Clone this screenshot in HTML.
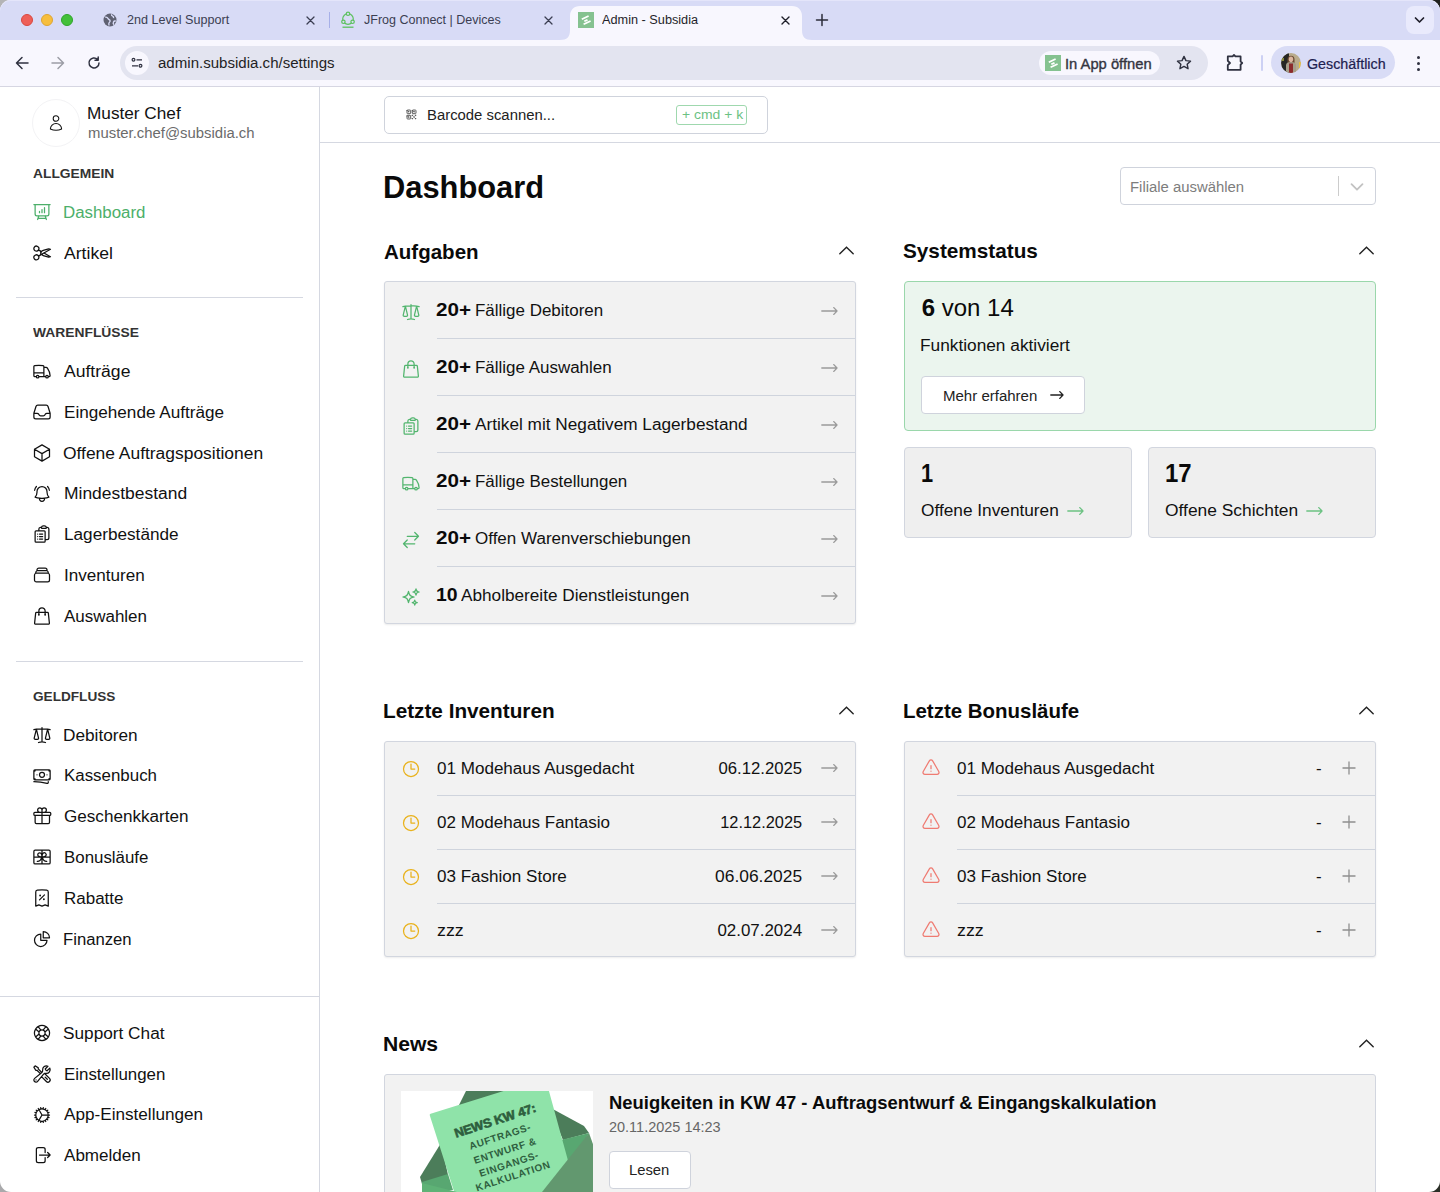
<!DOCTYPE html><html><head><meta charset="utf-8"><title>Admin - Subsidia</title>
<style>
html,body{margin:0;padding:0}
body{width:1440px;height:1192px;overflow:hidden;position:relative;background:#fff;font-family:"Liberation Sans", sans-serif;}
.t{position:absolute;white-space:pre;font-family:"Liberation Sans", sans-serif;}
svg{overflow:visible}
</style></head><body>
<div style="position:absolute;left:0px;top:0px;width:720px;height:596px;background:#b4b4b6"></div>
<div style="position:absolute;left:720px;top:0px;width:720px;height:596px;background:#1f211e"></div>
<div style="position:absolute;left:0px;top:596px;width:720px;height:596px;background:#a9a9ab"></div>
<div style="position:absolute;left:720px;top:596px;width:720px;height:596px;background:#2a2e26"></div>
<div style="position:absolute;left:0px;top:0px;width:1440px;height:1192px;background:#fff;border-radius:11px"></div>
<div style="position:absolute;left:0px;top:0px;width:1440px;height:40px;background:#d8dbf6;border-radius:11px 11px 0 0;box-shadow:inset 0 1px 0 #e4e5fa"></div>
<div style="position:absolute;left:21px;top:14px;width:12px;height:12px;background:#ee5f58;border-radius:50%;box-sizing:border-box;border:0.5px solid #d9473f"></div>
<div style="position:absolute;left:41px;top:14px;width:12px;height:12px;background:#f7be3d;border-radius:50%;box-sizing:border-box;border:0.5px solid #dea532"></div>
<div style="position:absolute;left:61px;top:14px;width:12px;height:12px;background:#43c03a;border-radius:50%;box-sizing:border-box;border:0.5px solid #2fa52a"></div>
<svg style="position:absolute;left:103px;top:13px" width="14" height="14" viewBox="0 0 14 14"><circle cx="7" cy="7" r="6.5" fill="#5f6172"/><path d="M2.2 4.2c1.4-.2 2.4.4 2.8 1.4.4 1 1.6 1 2 1.8.4.9-.3 1.8-.9 2.3-.5.4-.3 1.6-.1 2.8M8.6 1.2c-.3 1 .2 1.6 1.1 1.9.9.3 1 1.3.8 2M12.8 8.2c-.9-.3-1.9 0-2.3.8-.4.8-.3 2 .5 2.6" fill="none" stroke="#d8dbf6" stroke-width="1.4"/></svg>
<div class="t" id="t0" style="left:126.70px;top:14.24px;font-size:12px;line-height:12px;font-weight:400;color:#3b3e52;letter-spacing:0.0px;transform-origin:left center;transform:scaleX(1.0492);">2nd Level Support</div>
<svg style="position:absolute;left:305.5px;top:15.5px" width="9" height="9" viewBox="0 0 9 9"><path d="M1 1l7 7M8 1L1 8" stroke="#3b3e52" stroke-width="1.3" stroke-linecap="round"/></svg>
<div style="position:absolute;left:329px;top:12px;width:1px;height:16px;background:#a7b0e8"></div>
<svg style="position:absolute;left:340px;top:11px" width="16" height="18" viewBox="0 0 16 18"><circle cx="8" cy="8" r="5.3" fill="none" stroke="#5cc15e" stroke-width="1.2"/><circle cx="8" cy="2.8" r="1.7" fill="#d8dbf6" stroke="#5cc15e" stroke-width="1.2"/><circle cx="3.4" cy="10.8" r="1.7" fill="#d8dbf6" stroke="#5cc15e" stroke-width="1.2"/><circle cx="12.6" cy="10.8" r="1.7" fill="#d8dbf6" stroke="#5cc15e" stroke-width="1.2"/><path d="M2.5 16.2h11" stroke="#5cc15e" stroke-width="1.3"/></svg>
<div class="t" id="t1" style="left:364.40px;top:14.24px;font-size:12px;line-height:12px;font-weight:400;color:#3b3e52;letter-spacing:0.0px;transform-origin:left center;transform:scaleX(1.0429);">JFrog Connect | Devices</div>
<svg style="position:absolute;left:543.5px;top:15.5px" width="9" height="9" viewBox="0 0 9 9"><path d="M1 1l7 7M8 1L1 8" stroke="#3b3e52" stroke-width="1.3" stroke-linecap="round"/></svg>
<svg style="position:absolute;left:560px;top:6px" width="252" height="34" viewBox="0 0 252 34"><path d="M0 34 C7 34 10 31 10 24 V10 C10 4 14 0 20 0 H232 C238 0 242 4 242 10 V24 C242 31 245 34 252 34 Z" fill="#f8f7fe"/></svg>
<svg style="position:absolute;left:578px;top:12px" width="16" height="16" viewBox="0 0 16 16"><rect width="16" height="16" fill="#85c290"/><path d="M3.8 7.2 L10.6 4.0 M6.3 9.3 L9.5 7.9 M5.6 12.3 L12.6 9.0" fill="none" stroke="#fff" stroke-width="1.8" stroke-linecap="butt"/></svg>
<div class="t" id="t2" style="left:602.30px;top:14.24px;font-size:12px;line-height:12px;font-weight:400;color:#1f1f2a;letter-spacing:0.0px;transform-origin:left center;transform:scaleX(1.0593);">Admin - Subsidia</div>
<svg style="position:absolute;left:781px;top:15.5px" width="9" height="9" viewBox="0 0 9 9"><path d="M1 1l7 7M8 1L1 8" stroke="#1f1f2a" stroke-width="1.4" stroke-linecap="round"/></svg>
<svg style="position:absolute;left:816px;top:14px" width="12" height="12" viewBox="0 0 12 12"><path d="M6 0.5v11M0.5 6h11" stroke="#2b2d3a" stroke-width="1.5" stroke-linecap="round"/></svg>
<div style="position:absolute;left:1406px;top:6px;width:28px;height:28px;background:#e9eafc;border-radius:8px"></div>
<svg style="position:absolute;left:1414px;top:16px" width="11" height="8" viewBox="0 0 11 8"><path d="M1.5 2l4 4 4-4" fill="none" stroke="#1f1f2a" stroke-width="1.7" stroke-linecap="round" stroke-linejoin="round"/></svg>
<div style="position:absolute;left:0px;top:40px;width:1440px;height:46px;background:#f8f7fe"></div>
<div style="position:absolute;left:0px;top:86px;width:1440px;height:1px;background:#d6d6e2"></div>
<svg style="position:absolute;left:15px;top:56px" width="14" height="14" viewBox="0 0 14 14"><path d="M13 7H1.5M7 1.5 1.5 7 7 12.5" fill="none" stroke="#2f3140" stroke-width="1.5" stroke-linecap="round" stroke-linejoin="round"/></svg>
<svg style="position:absolute;left:51px;top:56px" width="14" height="14" viewBox="0 0 14 14"><path d="M1 7h11.5M7 1.5 12.5 7 7 12.5" fill="none" stroke="#9c9da6" stroke-width="1.5" stroke-linecap="round" stroke-linejoin="round"/></svg>
<svg style="position:absolute;left:87px;top:56px" width="14" height="14" viewBox="0 0 14 14"><path d="M12 7a5 5 0 1 1-1.5-3.6M11.2 1v3.2H8" fill="none" stroke="#2f3140" stroke-width="1.5" stroke-linecap="round" stroke-linejoin="round"/></svg>
<div style="position:absolute;left:120px;top:46px;width:1088px;height:34px;background:#e3e4f0;border-radius:17px"></div>
<div style="position:absolute;left:125px;top:51px;width:24px;height:24px;background:#f8f7fe;border-radius:50%"></div>
<svg style="position:absolute;left:131px;top:57px" width="12" height="12" viewBox="0 0 12 12"><circle cx="2.5" cy="2.8" r="1.4" fill="none" stroke="#2f3140" stroke-width="1.2"/><path d="M5.5 2.8h5.5M1 8.8h6" stroke="#2f3140" stroke-width="1.3"/><circle cx="9.5" cy="8.8" r="1.4" fill="none" stroke="#2f3140" stroke-width="1.2"/></svg>
<div class="t" id="t3" style="left:157.50px;top:56.45px;font-size:14px;line-height:14px;font-weight:400;color:#1f1f24;letter-spacing:0.0px;transform-origin:left center;transform:scaleX(1.0755);">admin.subsidia.ch/settings</div>
<div style="position:absolute;left:1039px;top:51px;width:121px;height:24px;background:#f8f7fe;border-radius:12px"></div>
<svg style="position:absolute;left:1045px;top:55px" width="16" height="16" viewBox="0 0 16 16"><rect width="16" height="16" fill="#85c290"/><path d="M3.8 7.2 L10.6 4.0 M6.3 9.3 L9.5 7.9 M5.6 12.3 L12.6 9.0" fill="none" stroke="#fff" stroke-width="1.8" stroke-linecap="butt"/></svg>
<div class="t" id="t4" style="left:1065.00px;top:56.65px;font-size:14px;line-height:14px;font-weight:400;color:#34353f;letter-spacing:0.0px;transform-origin:left center;transform:scaleX(1.0527);-webkit-text-stroke:0.35px #34353f;">In App öffnen</div>
<svg style="position:absolute;left:1175px;top:54px" width="18" height="18" viewBox="0 0 24 24"><path d="M12 3.2l2.6 5.6 6.1.7-4.5 4.1 1.2 6-5.4-3-5.4 3 1.2-6-4.5-4.1 6.1-.7z" fill="none" stroke="#2f3140" stroke-width="1.9" stroke-linejoin="round"/></svg>
<svg style="position:absolute;left:1226px;top:54px" width="18" height="18" viewBox="0 0 18 18"><path d="M1.8 2.4h4.8l1.4-1.5 1.4 1.5h5.2v5l1.6 1.6-1.6 1.6v5.2H1.8v-4.6l2.2-2.2-2.2-2.2z" fill="none" stroke="#2f3140" stroke-width="1.8" stroke-linejoin="round"/></svg>
<div style="position:absolute;left:1260.5px;top:55px;width:2px;height:16px;background:#cdd1f4;border-radius:1px"></div>
<div style="position:absolute;left:1271px;top:46px;width:124px;height:33px;background:#d9dcf6;border-radius:17px"></div>
<svg style="position:absolute;left:1280.5px;top:52.7px" width="20" height="20" viewBox="0 0 20 20"><defs><clipPath id="cav"><circle cx="10" cy="10" r="9.9"/></clipPath></defs><g clip-path="url(#cav)"><rect width="20" height="20" fill="#b9ab8c"/><rect x="0" y="0" width="8" height="20" fill="#262624"/><rect x="0" y="5" width="3" height="3" fill="#8a8a3a"/><path d="M6.5 6c0-4.5 7-4.5 7 0v9h-7z" fill="#6b4a32"/><ellipse cx="10" cy="6.2" rx="2.2" ry="2.8" fill="#dcb6a0"/><path d="M5 20v-8c0-2 2-3 5-3s5 1 5 3v8z" fill="#a69e8a"/><rect x="8" y="10.5" width="4" height="9.5" fill="#8c2a2c"/><rect x="18" y="9" width="2" height="8" fill="#e7c040"/></g></svg>
<div class="t" id="t5" style="left:1307.00px;top:56.65px;font-size:14px;line-height:14px;font-weight:400;color:#1e2150;letter-spacing:0.0px;transform-origin:left center;transform:scaleX(1.0202);-webkit-text-stroke:0.2px #1e2150;">Geschäftlich</div>
<div style="position:absolute;left:1416.5px;top:55.5px;width:3px;height:3px;background:#2f3140;border-radius:50%"></div>
<div style="position:absolute;left:1416.5px;top:61.5px;width:3px;height:3px;background:#2f3140;border-radius:50%"></div>
<div style="position:absolute;left:1416.5px;top:67.5px;width:3px;height:3px;background:#2f3140;border-radius:50%"></div>
<div style="position:absolute;left:319px;top:87px;width:1px;height:1105px;background:#d5d8e1"></div>
<div style="position:absolute;left:32px;top:99px;width:48px;height:48px;border-radius:50%;box-sizing:border-box;border:1px solid #f3f3f5;background:#fff"></div>
<svg style="position:absolute;left:47px;top:114px" width="18" height="18" viewBox="0 0 24 24" fill="none" stroke="#111" stroke-width="1.4" stroke-linecap="round" stroke-linejoin="round"><path d="M15.75 6a3.75 3.75 0 1 1-7.5 0 3.75 3.75 0 0 1 7.5 0ZM4.501 20.118a7.5 7.5 0 0 1 14.998 0A17.933 17.933 0 0 1 12 21.75c-2.676 0-5.216-.584-7.499-1.632Z"/></svg>
<div class="t" id="t6" style="left:87.40px;top:105.66px;font-size:16px;line-height:16px;font-weight:400;color:#111;letter-spacing:0.0px;transform-origin:left center;transform:scaleX(1.0753);">Muster Chef</div>
<div class="t" id="t7" style="left:87.50px;top:126.45px;font-size:14px;line-height:14px;font-weight:400;color:#6b6b6b;letter-spacing:0.0px;transform-origin:left center;transform:scaleX(1.0637);">muster.chef@subsidia.ch</div>
<div class="t" id="t8" style="left:32.50px;top:167.30px;font-size:13px;line-height:13px;font-weight:700;color:#333;letter-spacing:0.0px;transform-origin:left center;transform:scaleX(1.0619);">ALLGEMEIN</div>
<svg style="position:absolute;left:32px;top:202.2px" width="20" height="20" viewBox="0 0 24 24" fill="none" stroke="#4caf6a" stroke-width="1.5" stroke-linecap="round" stroke-linejoin="round"><path d="M3.75 3v11.25A2.25 2.25 0 0 0 6 16.5h2.25M3.75 3h-1.5m1.5 0h16.5m0 0h1.5m-1.5 0v11.25A2.25 2.25 0 0 1 18 16.5h-2.25m-7.5 0h7.5m-7.5 0-1 3m8.5-3 1 3m0 0 .5 1.5m-.5-1.5h-9.5m0 0-.5 1.5M9 11.25v1.5M12 9v3.75m3-6v6"/></svg>
<div class="t" id="t9" style="left:62.80px;top:204.96px;font-size:16px;line-height:16px;font-weight:400;color:#4caf6a;letter-spacing:0.0px;transform-origin:left center;transform:scaleX(1.0539);">Dashboard</div>
<svg style="position:absolute;left:32px;top:243.39999999999998px" width="20" height="20" viewBox="0 0 24 24" fill="none" stroke="#111" stroke-width="1.5" stroke-linecap="round" stroke-linejoin="round"><path d="m7.848 8.25 1.536.887M7.848 8.25a3 3 0 1 1-5.196-3 3 3 0 0 1 5.196 3Zm1.536.887a2.165 2.165 0 0 1 1.083 1.839c.005.351.054.695.14 1.024M9.384 9.137l2.077 1.199M7.848 15.75l1.536-.887m-1.536.887a3 3 0 1 1-5.196 3 3 3 0 0 1 5.196-3Zm1.536-.887a2.165 2.165 0 0 0 1.083-1.838c.005-.352.054-.695.14-1.025m-1.223 2.863 2.077-1.199m0-3.328a4.323 4.323 0 0 1 2.068-1.379l5.325-1.628a4.5 4.5 0 0 1 2.48-.044l.803.215-7.794 4.5m-2.882-1.664A4.33 4.33 0 0 0 10.607 12m3.736 0 7.794 4.5-.802.215a4.5 4.5 0 0 1-2.48-.043l-5.326-1.629a4.324 4.324 0 0 1-2.068-1.379M14.343 12l-2.882 1.664"/></svg>
<div class="t" id="t10" style="left:63.50px;top:246.16px;font-size:16px;line-height:16px;font-weight:400;color:#111;letter-spacing:0.0px;transform-origin:left center;transform:scaleX(1.1000);">Artikel</div>
<div style="position:absolute;left:16px;top:297px;width:287px;height:1px;background:#d5d8e1"></div>
<div class="t" id="t11" style="left:32.50px;top:326.10px;font-size:13px;line-height:13px;font-weight:700;color:#333;letter-spacing:0.0px;transform-origin:left center;transform:scaleX(1.0635);">WARENFLÜSSE</div>
<svg style="position:absolute;left:32px;top:361.09999999999997px" width="20" height="20" viewBox="0 0 24 24" fill="none" stroke="#111" stroke-width="1.5" stroke-linecap="round" stroke-linejoin="round"><path d="M8.25 18.75a1.5 1.5 0 0 1-3 0m3 0a1.5 1.5 0 0 0-3 0m3 0h6m-9 0H3.375a1.125 1.125 0 0 1-1.125-1.125V14.25m17.25 4.5a1.5 1.5 0 0 1-3 0m3 0a1.5 1.5 0 0 0-3 0m3 0h1.125c.621 0 1.129-.504 1.09-1.124a17.902 17.902 0 0 0-3.213-9.193 2.056 2.056 0 0 0-1.58-.86H14.25M16.5 18.75h-2.25m0-11.177v-.958c0-.568-.422-1.048-.987-1.106a48.554 48.554 0 0 0-10.026 0 1.106 1.106 0 0 0-.987 1.106v7.635m12-6.677v6.677m0 4.5v-4.5m0 0h-12"/></svg>
<div class="t" id="t12" style="left:63.50px;top:363.86px;font-size:16px;line-height:16px;font-weight:400;color:#111;letter-spacing:0.0px;transform-origin:left center;transform:scaleX(1.0978);">Aufträge</div>
<svg style="position:absolute;left:32px;top:401.91999999999996px" width="20" height="20" viewBox="0 0 24 24" fill="none" stroke="#111" stroke-width="1.5" stroke-linecap="round" stroke-linejoin="round"><path d="M2.25 13.5h3.86a2.25 2.25 0 0 1 2.012 1.244l.256.512a2.25 2.25 0 0 0 2.013 1.244h3.218a2.25 2.25 0 0 0 2.013-1.244l.256-.512a2.25 2.25 0 0 1 2.013-1.244h3.859m-19.5.338V18a2.25 2.25 0 0 0 2.25 2.25h15A2.25 2.25 0 0 0 21.75 18v-4.162c0-.224-.034-.447-.1-.661L19.24 5.338a2.25 2.25 0 0 0-2.15-1.588H6.911a2.25 2.25 0 0 0-2.15 1.588L2.35 13.177a2.25 2.25 0 0 0-.1.661Z"/></svg>
<div class="t" id="t13" style="left:63.50px;top:404.68px;font-size:16px;line-height:16px;font-weight:400;color:#111;letter-spacing:0.0px;transform-origin:left center;transform:scaleX(1.0705);">Eingehende Aufträge</div>
<svg style="position:absolute;left:32px;top:442.73999999999995px" width="20" height="20" viewBox="0 0 24 24" fill="none" stroke="#111" stroke-width="1.5" stroke-linecap="round" stroke-linejoin="round"><path d="m21 7.5-9-5.25L3 7.5m18 0-9 5.25m9-5.25v9l-9 5.25M3 7.5l9 5.25M3 7.5v9l9 5.25m0-9v9"/></svg>
<div class="t" id="t14" style="left:62.80px;top:445.50px;font-size:16px;line-height:16px;font-weight:400;color:#111;letter-spacing:0.0px;transform-origin:left center;transform:scaleX(1.0884);">Offene Auftragspositionen</div>
<svg style="position:absolute;left:32px;top:483.56px" width="20" height="20" viewBox="0 0 24 24" fill="none" stroke="#111" stroke-width="1.5" stroke-linecap="round" stroke-linejoin="round"><path d="M14.857 17.082a23.848 23.848 0 0 0 5.454-1.31A8.967 8.967 0 0 1 18 9.75V9A6 6 0 0 0 6 9v.75a8.967 8.967 0 0 1-2.312 6.022c1.733.64 3.56 1.085 5.455 1.31m5.714 0a24.255 24.255 0 0 1-5.714 0m5.714 0a3 3 0 1 1-5.714 0M3.124 7.5A8.969 8.969 0 0 1 5.292 3m13.416 0a8.969 8.969 0 0 1 2.168 4.5"/></svg>
<div class="t" id="t15" style="left:63.50px;top:486.32px;font-size:16px;line-height:16px;font-weight:400;color:#111;letter-spacing:0.0px;transform-origin:left center;transform:scaleX(1.0897);">Mindestbestand</div>
<svg style="position:absolute;left:32px;top:524.38px" width="20" height="20" viewBox="0 0 24 24" fill="none" stroke="#111" stroke-width="1.5" stroke-linecap="round" stroke-linejoin="round"><path d="M9 12h3.75M9 15h3.75M9 18h3.75m3 .75H18a2.25 2.25 0 0 0 2.25-2.25V6.108c0-1.135-.845-2.098-1.976-2.192a48.424 48.424 0 0 0-1.123-.08m-5.801 0c-.065.21-.1.433-.1.664 0 .414.336.75.75.75h4.5a.75.75 0 0 0 .75-.75 2.25 2.25 0 0 0-.1-.664m-5.8 0A2.251 2.251 0 0 1 13.5 2.25H15c1.012 0 1.867.668 2.15 1.586m-5.8 0c-.376.023-.75.05-1.124.08C9.095 4.01 8.25 4.973 8.25 6.108V8.25m0 0H4.875c-.621 0-1.125.504-1.125 1.125v11.25c0 .621.504 1.125 1.125 1.125h9.75c.621 0 1.125-.504 1.125-1.125V9.375c0-.621-.504-1.125-1.125-1.125H8.25ZM6.75 12h.008v.008H6.75V12Zm0 3h.008v.008H6.75V15Zm0 3h.008v.008H6.75V18Z"/></svg>
<div class="t" id="t16" style="left:63.50px;top:527.14px;font-size:16px;line-height:16px;font-weight:400;color:#111;letter-spacing:0.0px;transform-origin:left center;transform:scaleX(1.0734);">Lagerbestände</div>
<svg style="position:absolute;left:32px;top:565.2px" width="20" height="20" viewBox="0 0 24 24" fill="none" stroke="#111" stroke-width="1.5" stroke-linecap="round" stroke-linejoin="round"><path d="M6 6.878V6a2.25 2.25 0 0 1 2.25-2.25h7.5A2.25 2.25 0 0 1 18 6v.878m-12 0c.235-.083.487-.128.75-.128h10.5c.263 0 .515.045.75.128m-12 0A2.25 2.25 0 0 0 4.5 9v.878m13.5-3A2.25 2.25 0 0 1 19.5 9v.878m0 0a2.246 2.246 0 0 0-.75-.128H5.25c-.263 0-.515.045-.75.128m15 0A2.25 2.25 0 0 1 21 12v6a2.25 2.25 0 0 1-2.25 2.25H5.25A2.25 2.25 0 0 1 3 18v-6c0-.98.626-1.813 1.5-2.122"/></svg>
<div class="t" id="t17" style="left:63.50px;top:567.96px;font-size:16px;line-height:16px;font-weight:400;color:#111;letter-spacing:0.0px;transform-origin:left center;transform:scaleX(1.0687);">Inventuren</div>
<svg style="position:absolute;left:32px;top:606.02px" width="20" height="20" viewBox="0 0 24 24" fill="none" stroke="#111" stroke-width="1.5" stroke-linecap="round" stroke-linejoin="round"><path d="M15.75 10.5V6a3.75 3.75 0 1 0-7.5 0v4.5m11.356-1.993 1.263 12c.07.665-.45 1.243-1.119 1.243H4.25a1.125 1.125 0 0 1-1.12-1.243l1.264-12A1.125 1.125 0 0 1 5.513 7.5h12.974c.576 0 1.059.435 1.119 1.007ZM8.625 10.5a.375.375 0 1 1-.75 0 .375.375 0 0 1 .75 0Zm7.5 0a.375.375 0 1 1-.75 0 .375.375 0 0 1 .75 0Z"/></svg>
<div class="t" id="t18" style="left:63.50px;top:608.78px;font-size:16px;line-height:16px;font-weight:400;color:#111;letter-spacing:0.0px;transform-origin:left center;transform:scaleX(1.0603);">Auswahlen</div>
<div style="position:absolute;left:16px;top:661px;width:287px;height:1px;background:#d5d8e1"></div>
<div class="t" id="t19" style="left:32.50px;top:690.20px;font-size:13px;line-height:13px;font-weight:700;color:#333;letter-spacing:0.0px;transform-origin:left center;transform:scaleX(1.0466);">GELDFLUSS</div>
<svg style="position:absolute;left:32px;top:724.8000000000001px" width="20" height="20" viewBox="0 0 24 24" fill="none" stroke="#111" stroke-width="1.5" stroke-linecap="round" stroke-linejoin="round"><path d="M12 3v17.25m0 0c-1.472 0-2.882.265-4.185.75M12 20.25c1.472 0 2.882.265 4.185.75M18.75 4.97A48.416 48.416 0 0 0 12 4.5c-2.291 0-4.545.16-6.75.47m13.5 0c1.01.143 2.01.317 3 .52m-3-.52 2.62 10.726c.122.499-.106 1.028-.589 1.202a5.988 5.988 0 0 1-2.031.352 5.988 5.988 0 0 1-2.031-.352c-.483-.174-.711-.703-.59-1.202L18.75 4.971Zm-16.5.52c.99-.203 1.99-.377 3-.52m0 0 2.62 10.726c.122.499-.106 1.028-.589 1.202a5.989 5.989 0 0 1-2.031.352 5.989 5.989 0 0 1-2.031-.352c-.483-.174-.711-.703-.59-1.202L5.25 4.971Z"/></svg>
<div class="t" id="t20" style="left:62.80px;top:727.56px;font-size:16px;line-height:16px;font-weight:400;color:#111;letter-spacing:0.0px;transform-origin:left center;transform:scaleX(1.0768);">Debitoren</div>
<svg style="position:absolute;left:32px;top:765.6200000000001px" width="20" height="20" viewBox="0 0 24 24" fill="none" stroke="#111" stroke-width="1.5" stroke-linecap="round" stroke-linejoin="round"><path d="M2.25 18.75a60.07 60.07 0 0 1 15.797 2.101c.727.198 1.453-.342 1.453-1.096V18.75M3.75 4.5v.75A.75.75 0 0 1 3 6h-.75m0 0v-.375c0-.621.504-1.125 1.125-1.125H20.25M2.25 6v9m18-10.5v.75c0 .414.336.75.75.75h.75m-1.5-1.5h.375c.621 0 1.125.504 1.125 1.125v9.75c0 .621-.504 1.125-1.125 1.125h-.375m1.5-1.5H21a.75.75 0 0 0-.75.75v.75m0 0H3.75m0 0h-.375a1.125 1.125 0 0 1-1.125-1.125V15m1.5 1.5v-.75A.75.75 0 0 0 3 15h-.75M15 10.5a3 3 0 1 1-6 0 3 3 0 0 1 6 0Zm3 0h.008v.008H18V10.5Zm-12 0h.008v.008H6V10.5Z"/></svg>
<div class="t" id="t21" style="left:63.50px;top:768.38px;font-size:16px;line-height:16px;font-weight:400;color:#111;letter-spacing:0.0px;transform-origin:left center;transform:scaleX(1.0561);">Kassenbuch</div>
<svg style="position:absolute;left:32px;top:806.44px" width="20" height="20" viewBox="0 0 24 24" fill="none" stroke="#111" stroke-width="1.5" stroke-linecap="round" stroke-linejoin="round"><path d="M21 11.25v8.25a1.5 1.5 0 0 1-1.5 1.5H5.25a1.5 1.5 0 0 1-1.5-1.5v-8.25M12 4.875A2.625 2.625 0 1 0 9.375 7.5H12m0-2.625V7.5m0-2.625A2.625 2.625 0 1 1 14.625 7.5H12m0 0V21m-8.625-9.75h18c.621 0 1.125-.504 1.125-1.125v-1.5c0-.621-.504-1.125-1.125-1.125h-18c-.621 0-1.125.504-1.125 1.125v1.5c0 .621.504 1.125 1.125 1.125Z"/></svg>
<div class="t" id="t22" style="left:63.50px;top:809.20px;font-size:16px;line-height:16px;font-weight:400;color:#111;letter-spacing:0.0px;transform-origin:left center;transform:scaleX(1.0685);">Geschenkkarten</div>
<svg style="position:absolute;left:32px;top:847.2600000000001px" width="20" height="20" viewBox="0 0 24 24" fill="none" stroke="#111" stroke-width="1.5" stroke-linecap="round" stroke-linejoin="round"><path d="M12 3.75v16.5M2.25 12h19.5M6.375 17.25a4.875 4.875 0 0 0 4.875-4.875V12m6.375 5.25a4.875 4.875 0 0 1-4.875-4.875V12m-9 8.25h16.5a1.5 1.5 0 0 0 1.5-1.5V5.25a1.5 1.5 0 0 0-1.5-1.5H3.75a1.5 1.5 0 0 0-1.5 1.5v13.5a1.5 1.5 0 0 0 1.5 1.5Zm12.621-9.44c-1.409 1.41-4.242 1.061-4.242 1.061s-.349-2.833 1.06-4.242a2.25 2.25 0 0 1 3.182 3.182ZM10.773 7.63c1.409 1.409 1.06 4.242 1.06 4.242S9 12.22 7.592 10.811a2.25 2.25 0 1 1 3.182-3.182Z"/></svg>
<div class="t" id="t23" style="left:63.50px;top:850.02px;font-size:16px;line-height:16px;font-weight:400;color:#111;letter-spacing:0.0px;transform-origin:left center;transform:scaleX(1.0542);">Bonusläufe</div>
<svg style="position:absolute;left:32px;top:888.08px" width="20" height="20" viewBox="0 0 24 24" fill="none" stroke="#111" stroke-width="1.5" stroke-linecap="round" stroke-linejoin="round"><path d="m9 14.25 6-6m4.5-3.493V21.75l-3.75-1.5-3.75 1.5-3.75-1.5-3.75 1.5V4.757c0-1.108.806-2.057 1.907-2.185a48.507 48.507 0 0 1 11.186 0c1.1.128 1.907 1.077 1.907 2.185ZM9.75 9h.008v.008H9.75V9Zm.375 0a.375.375 0 1 1-.75 0 .375.375 0 0 1 .75 0Zm4.125 4.5h.008v.008h-.008V13.5Zm.375 0a.375.375 0 1 1-.75 0 .375.375 0 0 1 .75 0Z"/></svg>
<div class="t" id="t24" style="left:63.50px;top:890.84px;font-size:16px;line-height:16px;font-weight:400;color:#111;letter-spacing:0.0px;transform-origin:left center;transform:scaleX(1.0616);">Rabatte</div>
<svg style="position:absolute;left:32px;top:928.9000000000001px" width="20" height="20" viewBox="0 0 24 24" fill="none" stroke="#111" stroke-width="1.5" stroke-linecap="round" stroke-linejoin="round"><path d="M10.5 6a7.5 7.5 0 1 0 7.5 7.5h-7.5V6Z M13.5 10.5H21A7.5 7.5 0 0 0 13.5 3v7.5Z"/></svg>
<div class="t" id="t25" style="left:62.80px;top:931.66px;font-size:16px;line-height:16px;font-weight:400;color:#111;letter-spacing:0.0px;transform-origin:left center;transform:scaleX(1.0421);">Finanzen</div>
<div style="position:absolute;left:0px;top:996px;width:319px;height:1px;background:#d5d8e1"></div>
<svg style="position:absolute;left:32px;top:1023.0px" width="20" height="20" viewBox="0 0 24 24" fill="none" stroke="#111" stroke-width="1.5" stroke-linecap="round" stroke-linejoin="round"><path d="M16.712 4.33a9.027 9.027 0 0 1 1.652 1.306c.51.51.944 1.064 1.306 1.652M16.712 4.33l-3.448 4.138m3.448-4.138a9.014 9.014 0 0 0-9.424 0M19.67 7.288l-4.138 3.448m4.138-3.448a9.014 9.014 0 0 1 0 9.424m-4.138-5.976a3.736 3.736 0 0 0-.88-1.388 3.737 3.737 0 0 0-1.388-.88m2.268 2.268a3.765 3.765 0 0 1 0 2.528m-2.268-4.796a3.765 3.765 0 0 0-2.528 0m4.796 4.796c-.181.506-.475.982-.88 1.388a3.736 3.736 0 0 1-1.388.88m2.268-2.268 4.138 3.448m0 0a9.027 9.027 0 0 1-1.306 1.652c-.51.51-1.064.944-1.652 1.306m0 0-3.448-4.138m3.448 4.138a9.014 9.014 0 0 1-9.424 0m5.976-4.138a3.765 3.765 0 0 1-2.528 0m0 0a3.736 3.736 0 0 1-1.388-.88 3.737 3.737 0 0 1-.88-1.388m2.268 2.268L7.288 19.67m0 0a9.024 9.024 0 0 1-1.652-1.306 9.027 9.027 0 0 1-1.306-1.652m0 0 4.138-3.448M4.33 16.712a9.014 9.014 0 0 1 0-9.424m4.138 5.976a3.765 3.765 0 0 1 0-2.528m0 0c.181-.506.475-.982.88-1.388a3.736 3.736 0 0 1 1.388-.88m-2.268 2.268L4.33 7.288m6.406 1.18L7.288 4.33m0 0a9.024 9.024 0 0 0-1.652 1.306A9.025 9.025 0 0 0 4.33 7.288"/></svg>
<div class="t" id="t26" style="left:62.80px;top:1025.76px;font-size:16px;line-height:16px;font-weight:400;color:#111;letter-spacing:0.0px;transform-origin:left center;transform:scaleX(1.0766);">Support Chat</div>
<svg style="position:absolute;left:32px;top:1063.82px" width="20" height="20" viewBox="0 0 24 24" fill="none" stroke="#111" stroke-width="1.5" stroke-linecap="round" stroke-linejoin="round"><path d="M11.42 15.17 17.25 21A2.652 2.652 0 0 0 21 17.25l-5.877-5.877M11.42 15.17l2.496-3.03c.317-.384.74-.626 1.208-.766M11.42 15.17l-4.655 5.653a2.548 2.548 0 1 1-3.586-3.586l6.837-5.63m5.108-.233c.55-.164 1.163-.188 1.743-.14a4.5 4.5 0 0 0 4.486-6.336l-3.276 3.277a3.004 3.004 0 0 1-2.25-2.25l3.276-3.276a4.5 4.5 0 0 0-6.336 4.486c.091 1.076-.071 2.264-.904 2.95l-.102.085m-1.745 1.437L5.909 7.5H4.5L2.25 3.75l1.5-1.5L7.5 4.5v1.409l4.26 4.26m-1.745 1.437 1.745-1.437m6.615 8.206L15.75 15.75M4.867 19.125h.008v.008h-.008v-.008Z"/></svg>
<div class="t" id="t27" style="left:63.50px;top:1066.58px;font-size:16px;line-height:16px;font-weight:400;color:#111;letter-spacing:0.0px;transform-origin:left center;transform:scaleX(1.0544);">Einstellungen</div>
<svg style="position:absolute;left:32px;top:1104.64px" width="20" height="20" viewBox="0 0 24 24" fill="none" stroke="#111" stroke-width="1.5" stroke-linecap="round" stroke-linejoin="round"><path d="M4.5 12a7.5 7.5 0 0 0 15 0m-15 0a7.5 7.5 0 1 1 15 0m-15 0H3m16.5 0H21m-1.5 0H12m-8.457 3.077 1.41-.513m14.095-5.13 1.41-.513M5.106 17.785l1.15-.964m11.49-9.642 1.149-.964M7.501 19.795l.75-1.3m7.5-12.99.75-1.3m-6.063 16.658.26-1.477m2.605-14.772.26-1.477m0 17.726-.26-1.477M10.698 4.614l-.26-1.477M16.5 19.794l-.75-1.299M7.5 4.205 12 12m6.894 5.785-1.149-.964M6.256 7.178l-1.15-.964m15.352 8.864-1.41-.513M4.954 9.435l-1.41-.514M12.002 12l-3.75 6.495"/></svg>
<div class="t" id="t28" style="left:63.50px;top:1107.40px;font-size:16px;line-height:16px;font-weight:400;color:#111;letter-spacing:0.0px;transform-origin:left center;transform:scaleX(1.0710);">App-Einstellungen</div>
<svg style="position:absolute;left:32px;top:1145.46px" width="20" height="20" viewBox="0 0 24 24" fill="none" stroke="#111" stroke-width="1.5" stroke-linecap="round" stroke-linejoin="round"><path d="M15.75 9V5.25A2.25 2.25 0 0 0 13.5 3h-6a2.25 2.25 0 0 0-2.25 2.25v13.5A2.25 2.25 0 0 0 7.5 21h6a2.25 2.25 0 0 0 2.25-2.25V15m3 0 3-3m0 0-3-3m3 3H9"/></svg>
<div class="t" id="t29" style="left:63.50px;top:1148.22px;font-size:16px;line-height:16px;font-weight:400;color:#111;letter-spacing:0.0px;transform-origin:left center;transform:scaleX(1.0660);">Abmelden</div>
<div style="position:absolute;left:320px;top:142px;width:1120px;height:1px;background:#d5d8e1"></div>
<div style="position:absolute;left:384px;top:96px;width:384px;height:38px;box-sizing:border-box;border:1px solid #cfd3dc;border-radius:5px;background:#fff"></div>
<svg style="position:absolute;left:405px;top:108px" width="13" height="13" viewBox="0 0 24 24" fill="none" stroke="#555" stroke-width="1.8" stroke-linecap="round" stroke-linejoin="round"><path d="M3.75 4.875c0-.621.504-1.125 1.125-1.125h4.5c.621 0 1.125.504 1.125 1.125v4.5c0 .621-.504 1.125-1.125 1.125h-4.5A1.125 1.125 0 0 1 3.75 9.375v-4.5ZM3.75 14.625c0-.621.504-1.125 1.125-1.125h4.5c.621 0 1.125.504 1.125 1.125v4.5c0 .621-.504 1.125-1.125 1.125h-4.5a1.125 1.125 0 0 1-1.125-1.125v-4.5ZM13.5 4.875c0-.621.504-1.125 1.125-1.125h4.5c.621 0 1.125.504 1.125 1.125v4.5c0 .621-.504 1.125-1.125 1.125h-4.5A1.125 1.125 0 0 1 13.5 9.375v-4.5ZM6.75 6.75h.75v.75h-.75v-.75ZM6.75 16.5h.75v.75h-.75v-.75ZM16.5 6.75h.75v.75h-.75v-.75ZM13.5 13.5h.75v.75h-.75v-.75ZM13.5 19.5h.75v.75h-.75v-.75ZM19.5 13.5h.75v.75h-.75v-.75ZM19.5 19.5h.75v.75h-.75v-.75ZM16.5 16.5h.75v.75h-.75v-.75Z"/></svg>
<div class="t" id="t30" style="left:426.80px;top:107.65px;font-size:14px;line-height:14px;font-weight:400;color:#222;letter-spacing:0.0px;transform-origin:left center;transform:scaleX(1.0618);">Barcode scannen...</div>
<div style="position:absolute;left:676px;top:105px;width:71px;height:20px;box-sizing:border-box;border:1px solid #9fd8ae;border-radius:3px"></div>
<div class="t" id="t31" style="left:681.70px;top:109.42px;font-size:12.5px;line-height:12.5px;font-weight:400;color:#6cc283;letter-spacing:0.0px;transform-origin:left center;transform:scaleX(1.1131);">+ cmd + k</div>
<div class="t" id="t32" style="left:383.20px;top:170.61px;font-size:32px;line-height:32px;font-weight:700;color:#0a0a0a;letter-spacing:0.0px;transform-origin:left center;transform:scaleX(0.9639);">Dashboard</div>
<div style="position:absolute;left:1120px;top:167px;width:256px;height:38px;box-sizing:border-box;border:1px solid #cfd3dc;border-radius:4px;background:#fff"></div>
<div class="t" id="t33" style="left:1129.80px;top:179.75px;font-size:14px;line-height:14px;font-weight:400;color:#7d7d7d;letter-spacing:0.0px;transform-origin:left center;transform:scaleX(1.0623);">Filiale auswählen</div>
<div style="position:absolute;left:1338px;top:176px;width:1px;height:20px;background:#cccccc"></div>
<svg style="position:absolute;left:1350px;top:182px" width="14" height="10" viewBox="0 0 14 10"><path d="M1.5 2.2l5.5 5.5 5.5-5.5" fill="none" stroke="#c2c2c2" stroke-width="1.8" stroke-linecap="round" stroke-linejoin="round"/></svg>
<div class="t" id="t34" style="left:383.50px;top:240.72px;font-size:21px;line-height:21px;font-weight:700;color:#0a0a0a;letter-spacing:0.0px;transform-origin:left center;transform:scaleX(0.9770);">Aufgaben</div>
<svg style="position:absolute;left:838.5px;top:245.6px" width="15" height="9" viewBox="0 0 15 9"><path d="M0.8 7.8L7.5 1.2 14.2 7.8" fill="none" stroke="#222" stroke-width="1.4" stroke-linecap="round" stroke-linejoin="miter"/></svg>
<div style="position:absolute;left:384px;top:281px;width:472px;height:343px;box-sizing:border-box;border:1px solid #d2d6df;border-radius:3px;background:#f2f2f2;box-shadow:0 1px 2px rgba(0,0,0,0.08)"></div>
<svg style="position:absolute;left:401px;top:301.5px" width="20" height="20" viewBox="0 0 24 24" fill="none" stroke="#52b56e" stroke-width="1.5" stroke-linecap="round" stroke-linejoin="round"><path d="M12 3v17.25m0 0c-1.472 0-2.882.265-4.185.75M12 20.25c1.472 0 2.882.265 4.185.75M18.75 4.97A48.416 48.416 0 0 0 12 4.5c-2.291 0-4.545.16-6.75.47m13.5 0c1.01.143 2.01.317 3 .52m-3-.52 2.62 10.726c.122.499-.106 1.028-.589 1.202a5.988 5.988 0 0 1-2.031.352 5.988 5.988 0 0 1-2.031-.352c-.483-.174-.711-.703-.59-1.202L18.75 4.971Zm-16.5.52c.99-.203 1.99-.377 3-.52m0 0 2.62 10.726c.122.499-.106 1.028-.589 1.202a5.989 5.989 0 0 1-2.031.352 5.989 5.989 0 0 1-2.031-.352c-.483-.174-.711-.703-.59-1.202L5.25 4.971Z"/></svg>
<div class="t" id="t35" style="left:435.80px;top:300.42px;font-size:19px;line-height:19px;font-weight:700;color:#0a0a0a;letter-spacing:0.0px;transform-origin:left center;transform:scaleX(1.0858);">20+</div>
<div class="t" id="t36" style="left:475.40px;top:302.96px;font-size:16px;line-height:16px;font-weight:400;color:#111;letter-spacing:0.0px;transform-origin:left center;transform:scaleX(1.0599);">Fällige Debitoren</div>
<svg style="position:absolute;left:821px;top:304.7px" width="17" height="12" viewBox="0 0 17 12"><path d="M0.8 6H16M12.8 2.6 16 6 12.8 9.4" fill="none" stroke="#9a9a9a" stroke-width="1.35" stroke-linecap="round" stroke-linejoin="round"/></svg>
<div style="position:absolute;left:437px;top:338px;width:418px;height:1px;background:#cfd4dd"></div>
<svg style="position:absolute;left:401px;top:358.5px" width="20" height="20" viewBox="0 0 24 24" fill="none" stroke="#52b56e" stroke-width="1.5" stroke-linecap="round" stroke-linejoin="round"><path d="M15.75 10.5V6a3.75 3.75 0 1 0-7.5 0v4.5m11.356-1.993 1.263 12c.07.665-.45 1.243-1.119 1.243H4.25a1.125 1.125 0 0 1-1.12-1.243l1.264-12A1.125 1.125 0 0 1 5.513 7.5h12.974c.576 0 1.059.435 1.119 1.007ZM8.625 10.5a.375.375 0 1 1-.75 0 .375.375 0 0 1 .75 0Zm7.5 0a.375.375 0 1 1-.75 0 .375.375 0 0 1 .75 0Z"/></svg>
<div class="t" id="t37" style="left:435.80px;top:357.42px;font-size:19px;line-height:19px;font-weight:700;color:#0a0a0a;letter-spacing:0.0px;transform-origin:left center;transform:scaleX(1.0858);">20+</div>
<div class="t" id="t38" style="left:475.40px;top:359.96px;font-size:16px;line-height:16px;font-weight:400;color:#111;letter-spacing:0.0px;transform-origin:left center;transform:scaleX(1.0592);">Fällige Auswahlen</div>
<svg style="position:absolute;left:821px;top:361.7px" width="17" height="12" viewBox="0 0 17 12"><path d="M0.8 6H16M12.8 2.6 16 6 12.8 9.4" fill="none" stroke="#9a9a9a" stroke-width="1.35" stroke-linecap="round" stroke-linejoin="round"/></svg>
<div style="position:absolute;left:437px;top:395px;width:418px;height:1px;background:#cfd4dd"></div>
<svg style="position:absolute;left:401px;top:415.5px" width="20" height="20" viewBox="0 0 24 24" fill="none" stroke="#52b56e" stroke-width="1.5" stroke-linecap="round" stroke-linejoin="round"><path d="M9 12h3.75M9 15h3.75M9 18h3.75m3 .75H18a2.25 2.25 0 0 0 2.25-2.25V6.108c0-1.135-.845-2.098-1.976-2.192a48.424 48.424 0 0 0-1.123-.08m-5.801 0c-.065.21-.1.433-.1.664 0 .414.336.75.75.75h4.5a.75.75 0 0 0 .75-.75 2.25 2.25 0 0 0-.1-.664m-5.8 0A2.251 2.251 0 0 1 13.5 2.25H15c1.012 0 1.867.668 2.15 1.586m-5.8 0c-.376.023-.75.05-1.124.08C9.095 4.01 8.25 4.973 8.25 6.108V8.25m0 0H4.875c-.621 0-1.125.504-1.125 1.125v11.25c0 .621.504 1.125 1.125 1.125h9.75c.621 0 1.125-.504 1.125-1.125V9.375c0-.621-.504-1.125-1.125-1.125H8.25ZM6.75 12h.008v.008H6.75V12Zm0 3h.008v.008H6.75V15Zm0 3h.008v.008H6.75V18Z"/></svg>
<div class="t" id="t39" style="left:435.80px;top:414.42px;font-size:19px;line-height:19px;font-weight:700;color:#0a0a0a;letter-spacing:0.0px;transform-origin:left center;transform:scaleX(1.0858);">20+</div>
<div class="t" id="t40" style="left:475.40px;top:416.96px;font-size:16px;line-height:16px;font-weight:400;color:#111;letter-spacing:0.0px;transform-origin:left center;transform:scaleX(1.0755);">Artikel mit Negativem Lagerbestand</div>
<svg style="position:absolute;left:821px;top:418.7px" width="17" height="12" viewBox="0 0 17 12"><path d="M0.8 6H16M12.8 2.6 16 6 12.8 9.4" fill="none" stroke="#9a9a9a" stroke-width="1.35" stroke-linecap="round" stroke-linejoin="round"/></svg>
<div style="position:absolute;left:437px;top:452px;width:418px;height:1px;background:#cfd4dd"></div>
<svg style="position:absolute;left:401px;top:472.5px" width="20" height="20" viewBox="0 0 24 24" fill="none" stroke="#52b56e" stroke-width="1.5" stroke-linecap="round" stroke-linejoin="round"><path d="M8.25 18.75a1.5 1.5 0 0 1-3 0m3 0a1.5 1.5 0 0 0-3 0m3 0h6m-9 0H3.375a1.125 1.125 0 0 1-1.125-1.125V14.25m17.25 4.5a1.5 1.5 0 0 1-3 0m3 0a1.5 1.5 0 0 0-3 0m3 0h1.125c.621 0 1.129-.504 1.09-1.124a17.902 17.902 0 0 0-3.213-9.193 2.056 2.056 0 0 0-1.58-.86H14.25M16.5 18.75h-2.25m0-11.177v-.958c0-.568-.422-1.048-.987-1.106a48.554 48.554 0 0 0-10.026 0 1.106 1.106 0 0 0-.987 1.106v7.635m12-6.677v6.677m0 4.5v-4.5m0 0h-12"/></svg>
<div class="t" id="t41" style="left:435.80px;top:471.42px;font-size:19px;line-height:19px;font-weight:700;color:#0a0a0a;letter-spacing:0.0px;transform-origin:left center;transform:scaleX(1.0858);">20+</div>
<div class="t" id="t42" style="left:475.40px;top:473.96px;font-size:16px;line-height:16px;font-weight:400;color:#111;letter-spacing:0.0px;transform-origin:left center;transform:scaleX(1.0563);">Fällige Bestellungen</div>
<svg style="position:absolute;left:821px;top:475.7px" width="17" height="12" viewBox="0 0 17 12"><path d="M0.8 6H16M12.8 2.6 16 6 12.8 9.4" fill="none" stroke="#9a9a9a" stroke-width="1.35" stroke-linecap="round" stroke-linejoin="round"/></svg>
<div style="position:absolute;left:437px;top:509px;width:418px;height:1px;background:#cfd4dd"></div>
<svg style="position:absolute;left:401px;top:529.5px" width="20" height="20" viewBox="0 0 24 24" fill="none" stroke="#52b56e" stroke-width="1.5" stroke-linecap="round" stroke-linejoin="round"><path d="M7.5 21 3 16.5m0 0L7.5 12M3 16.5h13.5m0-13.5L21 7.5m0 0L16.5 12M21 7.5H7.5"/></svg>
<div class="t" id="t43" style="left:435.80px;top:528.42px;font-size:19px;line-height:19px;font-weight:700;color:#0a0a0a;letter-spacing:0.0px;transform-origin:left center;transform:scaleX(1.0858);">20+</div>
<div class="t" id="t44" style="left:475.40px;top:530.96px;font-size:16px;line-height:16px;font-weight:400;color:#111;letter-spacing:0.0px;transform-origin:left center;transform:scaleX(1.0631);">Offen Warenverschiebungen</div>
<svg style="position:absolute;left:821px;top:532.7px" width="17" height="12" viewBox="0 0 17 12"><path d="M0.8 6H16M12.8 2.6 16 6 12.8 9.4" fill="none" stroke="#9a9a9a" stroke-width="1.35" stroke-linecap="round" stroke-linejoin="round"/></svg>
<div style="position:absolute;left:437px;top:566px;width:418px;height:1px;background:#cfd4dd"></div>
<svg style="position:absolute;left:401px;top:586.5px" width="20" height="20" viewBox="0 0 24 24" fill="none" stroke="#52b56e" stroke-width="1.5" stroke-linecap="round" stroke-linejoin="round"><path d="M9.813 15.904 9 18.75l-.813-2.846a4.5 4.5 0 0 0-3.09-3.09L2.25 12l2.846-.813a4.5 4.5 0 0 0 3.09-3.09L9 5.25l.813 2.846a4.5 4.5 0 0 0 3.09 3.09L15.75 12l-2.846.813a4.5 4.5 0 0 0-3.09 3.09ZM18.259 8.715 18 9.75l-.259-1.035a3.375 3.375 0 0 0-2.455-2.456L14.25 6l1.036-.259a3.375 3.375 0 0 0 2.455-2.456L18 2.25l.259 1.035a3.375 3.375 0 0 0 2.456 2.456L21.75 6l-1.035.259a3.375 3.375 0 0 0-2.456 2.456ZM16.894 20.567 16.5 21.75l-.394-1.183a2.25 2.25 0 0 0-1.423-1.423L13.5 18.75l1.183-.394a2.25 2.25 0 0 0 1.423-1.423l.394-1.183.394 1.183a2.25 2.25 0 0 0 1.423 1.423l1.183.394-1.183.394a2.25 2.25 0 0 0-1.423 1.423Z"/></svg>
<div class="t" id="t45" style="left:435.80px;top:585.42px;font-size:19px;line-height:19px;font-weight:700;color:#0a0a0a;letter-spacing:0.0px;transform-origin:left center;transform:scaleX(1.0217);">10</div>
<div class="t" id="t46" style="left:461.00px;top:587.96px;font-size:16px;line-height:16px;font-weight:400;color:#111;letter-spacing:0.0px;transform-origin:left center;transform:scaleX(1.0739);">Abholbereite Dienstleistungen</div>
<svg style="position:absolute;left:821px;top:589.7px" width="17" height="12" viewBox="0 0 17 12"><path d="M0.8 6H16M12.8 2.6 16 6 12.8 9.4" fill="none" stroke="#9a9a9a" stroke-width="1.35" stroke-linecap="round" stroke-linejoin="round"/></svg>
<div class="t" id="t47" style="left:903.40px;top:240.22px;font-size:21px;line-height:21px;font-weight:700;color:#0a0a0a;letter-spacing:0.0px;transform-origin:left center;transform:scaleX(0.9878);">Systemstatus</div>
<svg style="position:absolute;left:1358.5px;top:245.6px" width="15" height="9" viewBox="0 0 15 9"><path d="M0.8 7.8L7.5 1.2 14.2 7.8" fill="none" stroke="#222" stroke-width="1.4" stroke-linecap="round" stroke-linejoin="miter"/></svg>
<div style="position:absolute;left:904px;top:281px;width:472px;height:150px;box-sizing:border-box;border:1px solid #9ad7ab;border-radius:4px;background:#ebf5ee"></div>
<div class="t" style="left:921.7px;top:295.68px;font-size:24px;line-height:24px;color:#0a0a0a"><b>6</b> von 14</div>
<div class="t" id="t48" style="left:920.00px;top:337.96px;font-size:16px;line-height:16px;font-weight:400;color:#111;letter-spacing:0.0px;transform-origin:left center;transform:scaleX(1.0798);">Funktionen aktiviert</div>
<div style="position:absolute;left:921px;top:376px;width:164px;height:38px;box-sizing:border-box;border:1px solid #cfd3dc;border-radius:4px;background:#fff"></div>
<div class="t" id="t49" style="left:943.40px;top:388.65px;font-size:14px;line-height:14px;font-weight:400;color:#222;letter-spacing:0.0px;transform-origin:left center;transform:scaleX(1.0724);">Mehr erfahren</div>
<svg style="position:absolute;left:1050px;top:389px" width="14" height="12" viewBox="0 0 14 12"><path d="M0.8 6H13M9.8 2.6 13 6 9.8 9.4" fill="none" stroke="#222" stroke-width="1.35" stroke-linecap="round" stroke-linejoin="round"/></svg>
<div style="position:absolute;left:904px;top:447px;width:228px;height:91px;box-sizing:border-box;border:1px solid #d2d6df;border-radius:4px;background:#efefef"></div>
<div class="t" id="t50" style="left:921.20px;top:461.34px;font-size:25px;line-height:25px;font-weight:700;color:#0a0a0a;letter-spacing:0.0px;transform-origin:left center;transform:scaleX(0.8701);">1</div>
<div class="t" id="t51" style="left:920.90px;top:502.76px;font-size:16px;line-height:16px;font-weight:400;color:#111;letter-spacing:0.0px;transform-origin:left center;transform:scaleX(1.0783);">Offene Inventuren</div>
<svg style="position:absolute;left:1067px;top:505px" width="17" height="12" viewBox="0 0 17 12"><path d="M0.8 6H16M12.8 2.6 16 6 12.8 9.4" fill="none" stroke="#6cc283" stroke-width="1.35" stroke-linecap="round" stroke-linejoin="round"/></svg>
<div style="position:absolute;left:1148px;top:447px;width:228px;height:91px;box-sizing:border-box;border:1px solid #d2d6df;border-radius:4px;background:#efefef"></div>
<div class="t" id="t52" style="left:1165.20px;top:461.34px;font-size:25px;line-height:25px;font-weight:700;color:#0a0a0a;letter-spacing:0.0px;transform-origin:left center;transform:scaleX(0.9564);">17</div>
<div class="t" id="t53" style="left:1164.90px;top:502.76px;font-size:16px;line-height:16px;font-weight:400;color:#111;letter-spacing:0.0px;transform-origin:left center;transform:scaleX(1.0869);">Offene Schichten</div>
<svg style="position:absolute;left:1306px;top:505px" width="17" height="12" viewBox="0 0 17 12"><path d="M0.8 6H16M12.8 2.6 16 6 12.8 9.4" fill="none" stroke="#6cc283" stroke-width="1.35" stroke-linecap="round" stroke-linejoin="round"/></svg>
<div class="t" id="t54" style="left:383.20px;top:700.22px;font-size:21px;line-height:21px;font-weight:700;color:#0a0a0a;letter-spacing:0.0px;transform-origin:left center;transform:scaleX(0.9870);">Letzte Inventuren</div>
<svg style="position:absolute;left:838.5px;top:705.6px" width="15" height="9" viewBox="0 0 15 9"><path d="M0.8 7.8L7.5 1.2 14.2 7.8" fill="none" stroke="#222" stroke-width="1.4" stroke-linecap="round" stroke-linejoin="miter"/></svg>
<div style="position:absolute;left:384px;top:741px;width:472px;height:216px;box-sizing:border-box;border:1px solid #d2d6df;border-radius:3px;background:#f2f2f2;box-shadow:0 1px 2px rgba(0,0,0,0.08)"></div>
<svg style="position:absolute;left:401px;top:759px" width="20" height="20" viewBox="0 0 24 24" fill="none" stroke="#e9b21c" stroke-width="1.5" stroke-linecap="round" stroke-linejoin="round"><path d="M12 6v6h4.5m4.5 0a9 9 0 1 1-18 0 9 9 0 0 1 18 0Z"/></svg>
<div class="t" id="t55" style="left:437.20px;top:760.76px;font-size:16px;line-height:16px;font-weight:400;color:#111;letter-spacing:0.0px;transform-origin:left center;transform:scaleX(1.0658);">01 Modehaus Ausgedacht</div>
<div class="t" id="t56" style="right:637.70px;top:760.76px;font-size:16px;line-height:16px;font-weight:400;color:#111;letter-spacing:0.0px;transform-origin:right center;transform:scaleX(1.0440);">06.12.2025</div>
<svg style="position:absolute;left:821px;top:762px" width="17" height="12" viewBox="0 0 17 12"><path d="M0.8 6H16M12.8 2.6 16 6 12.8 9.4" fill="none" stroke="#9a9a9a" stroke-width="1.35" stroke-linecap="round" stroke-linejoin="round"/></svg>
<div style="position:absolute;left:437px;top:795px;width:418px;height:1px;background:#cfd4dd"></div>
<svg style="position:absolute;left:401px;top:813px" width="20" height="20" viewBox="0 0 24 24" fill="none" stroke="#e9b21c" stroke-width="1.5" stroke-linecap="round" stroke-linejoin="round"><path d="M12 6v6h4.5m4.5 0a9 9 0 1 1-18 0 9 9 0 0 1 18 0Z"/></svg>
<div class="t" id="t57" style="left:437.20px;top:814.76px;font-size:16px;line-height:16px;font-weight:400;color:#111;letter-spacing:0.0px;transform-origin:left center;transform:scaleX(1.0628);">02 Modehaus Fantasio</div>
<div class="t" id="t58" style="right:637.70px;top:814.76px;font-size:16px;line-height:16px;font-weight:400;color:#111;letter-spacing:0.0px;transform-origin:right center;transform:scaleX(1.0228);">12.12.2025</div>
<svg style="position:absolute;left:821px;top:816px" width="17" height="12" viewBox="0 0 17 12"><path d="M0.8 6H16M12.8 2.6 16 6 12.8 9.4" fill="none" stroke="#9a9a9a" stroke-width="1.35" stroke-linecap="round" stroke-linejoin="round"/></svg>
<div style="position:absolute;left:437px;top:849px;width:418px;height:1px;background:#cfd4dd"></div>
<svg style="position:absolute;left:401px;top:867px" width="20" height="20" viewBox="0 0 24 24" fill="none" stroke="#e9b21c" stroke-width="1.5" stroke-linecap="round" stroke-linejoin="round"><path d="M12 6v6h4.5m4.5 0a9 9 0 1 1-18 0 9 9 0 0 1 18 0Z"/></svg>
<div class="t" id="t59" style="left:437.20px;top:868.76px;font-size:16px;line-height:16px;font-weight:400;color:#111;letter-spacing:0.0px;transform-origin:left center;transform:scaleX(1.0652);">03 Fashion Store</div>
<div class="t" id="t60" style="right:637.70px;top:868.76px;font-size:16px;line-height:16px;font-weight:400;color:#111;letter-spacing:0.0px;transform-origin:right center;transform:scaleX(1.0864);">06.06.2025</div>
<svg style="position:absolute;left:821px;top:870px" width="17" height="12" viewBox="0 0 17 12"><path d="M0.8 6H16M12.8 2.6 16 6 12.8 9.4" fill="none" stroke="#9a9a9a" stroke-width="1.35" stroke-linecap="round" stroke-linejoin="round"/></svg>
<div style="position:absolute;left:437px;top:903px;width:418px;height:1px;background:#cfd4dd"></div>
<svg style="position:absolute;left:401px;top:921px" width="20" height="20" viewBox="0 0 24 24" fill="none" stroke="#e9b21c" stroke-width="1.5" stroke-linecap="round" stroke-linejoin="round"><path d="M12 6v6h4.5m4.5 0a9 9 0 1 1-18 0 9 9 0 0 1 18 0Z"/></svg>
<div class="t" id="t61" style="left:437.20px;top:922.76px;font-size:16px;line-height:16px;font-weight:400;color:#111;letter-spacing:0.0px;transform-origin:left center;transform:scaleX(1.1125);">zzz</div>
<div class="t" id="t62" style="right:637.70px;top:922.76px;font-size:16px;line-height:16px;font-weight:400;color:#111;letter-spacing:0.0px;transform-origin:right center;transform:scaleX(1.0577);">02.07.2024</div>
<svg style="position:absolute;left:821px;top:924px" width="17" height="12" viewBox="0 0 17 12"><path d="M0.8 6H16M12.8 2.6 16 6 12.8 9.4" fill="none" stroke="#9a9a9a" stroke-width="1.35" stroke-linecap="round" stroke-linejoin="round"/></svg>
<div class="t" id="t63" style="left:903.00px;top:700.22px;font-size:21px;line-height:21px;font-weight:700;color:#0a0a0a;letter-spacing:0.0px;transform-origin:left center;transform:scaleX(0.9742);">Letzte Bonusläufe</div>
<svg style="position:absolute;left:1358.5px;top:705.6px" width="15" height="9" viewBox="0 0 15 9"><path d="M0.8 7.8L7.5 1.2 14.2 7.8" fill="none" stroke="#222" stroke-width="1.4" stroke-linecap="round" stroke-linejoin="miter"/></svg>
<div style="position:absolute;left:904px;top:741px;width:472px;height:216px;box-sizing:border-box;border:1px solid #d2d6df;border-radius:3px;background:#f2f2f2;box-shadow:0 1px 2px rgba(0,0,0,0.08)"></div>
<svg style="position:absolute;left:921px;top:758px" width="20" height="20" viewBox="0 0 24 24" fill="none" stroke="#ef7b72" stroke-width="1.5" stroke-linecap="round" stroke-linejoin="round"><path d="M12 9v3.75m-9.303 3.376c-.866 1.5.217 3.374 1.948 3.374h14.71c1.73 0 2.813-1.874 1.948-3.374L13.949 3.378c-.866-1.5-3.032-1.5-3.898 0L2.697 16.126ZM12 15.75h.007v.008H12v-.008Z"/></svg>
<div class="t" id="t64" style="left:957.20px;top:760.76px;font-size:16px;line-height:16px;font-weight:400;color:#111;letter-spacing:0.0px;transform-origin:left center;transform:scaleX(1.0658);">01 Modehaus Ausgedacht</div>
<div class="t" id="t65" style="left:1315.50px;top:760.76px;font-size:16px;line-height:16px;font-weight:400;color:#111;letter-spacing:0.0px;transform-origin:left center;transform:scaleX(1.0500);">-</div>
<svg style="position:absolute;left:1342px;top:761px" width="14" height="14" viewBox="0 0 14 14"><path d="M7 0.5v13M0.5 7h13" stroke="#8f8f8f" stroke-width="1.3" stroke-linecap="butt"/></svg>
<div style="position:absolute;left:957px;top:795px;width:418px;height:1px;background:#cfd4dd"></div>
<svg style="position:absolute;left:921px;top:812px" width="20" height="20" viewBox="0 0 24 24" fill="none" stroke="#ef7b72" stroke-width="1.5" stroke-linecap="round" stroke-linejoin="round"><path d="M12 9v3.75m-9.303 3.376c-.866 1.5.217 3.374 1.948 3.374h14.71c1.73 0 2.813-1.874 1.948-3.374L13.949 3.378c-.866-1.5-3.032-1.5-3.898 0L2.697 16.126ZM12 15.75h.007v.008H12v-.008Z"/></svg>
<div class="t" id="t66" style="left:957.20px;top:814.76px;font-size:16px;line-height:16px;font-weight:400;color:#111;letter-spacing:0.0px;transform-origin:left center;transform:scaleX(1.0628);">02 Modehaus Fantasio</div>
<div class="t" id="t67" style="left:1315.50px;top:814.76px;font-size:16px;line-height:16px;font-weight:400;color:#111;letter-spacing:0.0px;transform-origin:left center;transform:scaleX(1.0500);">-</div>
<svg style="position:absolute;left:1342px;top:815px" width="14" height="14" viewBox="0 0 14 14"><path d="M7 0.5v13M0.5 7h13" stroke="#8f8f8f" stroke-width="1.3" stroke-linecap="butt"/></svg>
<div style="position:absolute;left:957px;top:849px;width:418px;height:1px;background:#cfd4dd"></div>
<svg style="position:absolute;left:921px;top:866px" width="20" height="20" viewBox="0 0 24 24" fill="none" stroke="#ef7b72" stroke-width="1.5" stroke-linecap="round" stroke-linejoin="round"><path d="M12 9v3.75m-9.303 3.376c-.866 1.5.217 3.374 1.948 3.374h14.71c1.73 0 2.813-1.874 1.948-3.374L13.949 3.378c-.866-1.5-3.032-1.5-3.898 0L2.697 16.126ZM12 15.75h.007v.008H12v-.008Z"/></svg>
<div class="t" id="t68" style="left:957.20px;top:868.76px;font-size:16px;line-height:16px;font-weight:400;color:#111;letter-spacing:0.0px;transform-origin:left center;transform:scaleX(1.0652);">03 Fashion Store</div>
<div class="t" id="t69" style="left:1315.50px;top:868.76px;font-size:16px;line-height:16px;font-weight:400;color:#111;letter-spacing:0.0px;transform-origin:left center;transform:scaleX(1.0500);">-</div>
<svg style="position:absolute;left:1342px;top:869px" width="14" height="14" viewBox="0 0 14 14"><path d="M7 0.5v13M0.5 7h13" stroke="#8f8f8f" stroke-width="1.3" stroke-linecap="butt"/></svg>
<div style="position:absolute;left:957px;top:903px;width:418px;height:1px;background:#cfd4dd"></div>
<svg style="position:absolute;left:921px;top:920px" width="20" height="20" viewBox="0 0 24 24" fill="none" stroke="#ef7b72" stroke-width="1.5" stroke-linecap="round" stroke-linejoin="round"><path d="M12 9v3.75m-9.303 3.376c-.866 1.5.217 3.374 1.948 3.374h14.71c1.73 0 2.813-1.874 1.948-3.374L13.949 3.378c-.866-1.5-3.032-1.5-3.898 0L2.697 16.126ZM12 15.75h.007v.008H12v-.008Z"/></svg>
<div class="t" id="t70" style="left:957.20px;top:922.76px;font-size:16px;line-height:16px;font-weight:400;color:#111;letter-spacing:0.0px;transform-origin:left center;transform:scaleX(1.1125);">zzz</div>
<div class="t" id="t71" style="left:1315.50px;top:922.76px;font-size:16px;line-height:16px;font-weight:400;color:#111;letter-spacing:0.0px;transform-origin:left center;transform:scaleX(1.0500);">-</div>
<svg style="position:absolute;left:1342px;top:923px" width="14" height="14" viewBox="0 0 14 14"><path d="M7 0.5v13M0.5 7h13" stroke="#8f8f8f" stroke-width="1.3" stroke-linecap="butt"/></svg>
<div class="t" id="t72" style="left:383.00px;top:1033.02px;font-size:21px;line-height:21px;font-weight:700;color:#0a0a0a;letter-spacing:0.0px;transform-origin:left center;transform:scaleX(1.0044);">News</div>
<svg style="position:absolute;left:1358.5px;top:1038.6px" width="15" height="9" viewBox="0 0 15 9"><path d="M0.8 7.8L7.5 1.2 14.2 7.8" fill="none" stroke="#222" stroke-width="1.4" stroke-linecap="round" stroke-linejoin="miter"/></svg>
<div style="position:absolute;left:384px;top:1074px;width:992px;height:200px;box-sizing:border-box;border:1px solid #d2d6df;border-radius:3px;background:#f2f2f2"></div>
<div class="t" id="t73" style="left:608.80px;top:1093.32px;font-size:19px;line-height:19px;font-weight:700;color:#0a0a0a;letter-spacing:0.0px;transform-origin:left center;transform:scaleX(0.9690);">Neuigkeiten in KW 47 - Auftragsentwurf &amp; Eingangskalkulation</div>
<div class="t" id="t74" style="left:608.80px;top:1120.15px;font-size:14px;line-height:14px;font-weight:400;color:#666;letter-spacing:0.0px;transform-origin:left center;transform:scaleX(1.0338);">20.11.2025 14:23</div>
<div style="position:absolute;left:609px;top:1151px;width:82px;height:38px;box-sizing:border-box;border:1px solid #cfd3dc;border-radius:4px;background:#fff"></div>
<div class="t" id="t75" style="left:629.00px;top:1162.95px;font-size:14px;line-height:14px;font-weight:400;color:#222;letter-spacing:0.0px;transform-origin:left center;transform:scaleX(1.0562);">Lesen</div>
<svg style="position:absolute;left:401px;top:1091px" width="192" height="101" viewBox="0 0 192 101">
<defs><clipPath id="nimg"><rect width="192" height="101"/></clipPath></defs>
<g clip-path="url(#nimg)">
<rect width="192" height="101" fill="#fff"/>
<polygon points="65,0 146,0 150,16 57,16" fill="#4c7d5a"/>
<polygon points="148,16 183,35 188,42 162,49" fill="#4c7d5a"/>
<polygon points="160,49 188,42 172,70 163,70" fill="#58a771"/>
<polygon points="40,52 19,86 21,93 47,84" fill="#4c7d5a"/>
<polygon points="21,91 47,83 52,99 22,101" fill="#58a771"/>
<polygon points="30,24 143.5,-11.5 185,140 67,140" fill="#8fe3a9" stroke="#8fe3a9" stroke-width="2.5" stroke-linejoin="round"/>
<polygon points="188,42 193,56 193,101 141,101" fill="#62986f"/>
<polygon points="21,92 56,101 21,101" fill="#5eb276"/>
<g fill="#2e5e3e" font-family="Liberation Sans" text-anchor="middle" dominant-baseline="central">
<text transform="translate(94,29.5) rotate(-18) scale(1.05,1)" font-size="12.5" font-weight="700" stroke="#2e5e3e" stroke-width="0.6" letter-spacing="-0.2">NEWS KW 47:</text>
<text transform="translate(99,45.5) rotate(-18)" font-size="10" font-weight="700" letter-spacing="0.6">AUFTRAGS-</text>
<text transform="translate(104,59.5) rotate(-18)" font-size="10" font-weight="700" letter-spacing="0.6">ENTWURF &amp;</text>
<text transform="translate(108,73) rotate(-18)" font-size="10" font-weight="700" letter-spacing="0.6">EINGANGS-</text>
<text transform="translate(112,85) rotate(-18)" font-size="10" font-weight="700" letter-spacing="0.6">KALKULATION</text>
</g>
</g></svg>
</body></html>
